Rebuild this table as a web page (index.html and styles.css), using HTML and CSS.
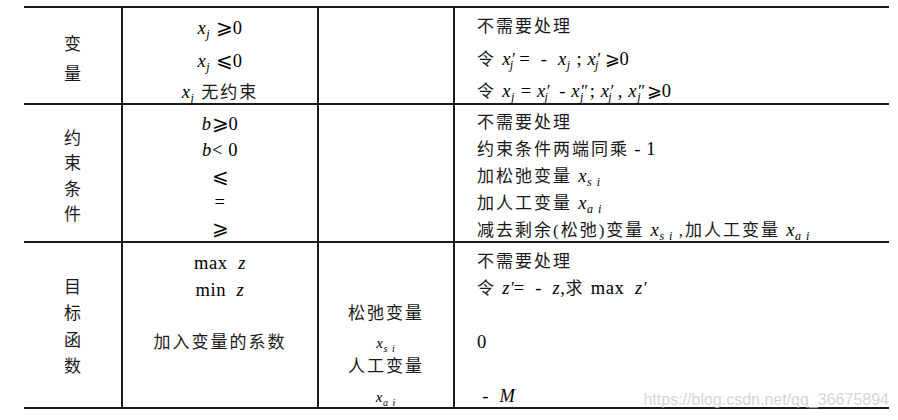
FILE: index.html
```html
<!DOCTYPE html>
<html lang="zh-CN">
<head>
<meta charset="utf-8">
<title>线性规划标准化</title>
<link rel="stylesheet" href="styles.css">
</head>
<body>
<div class="sheet">
  <div class="grid">
    <div class="cell c1 r1a"><div>变</div><div>量</div></div>
    <div class="cell c2 r1b">
      <div><span class="m"><i>x</i><sub>j</sub> <span class="rel">⩾</span>0</span></div>
      <div><span class="m"><i>x</i><sub>j</sub> <span class="rel">⩽</span>0</span></div>
      <div><span class="m"><i>x</i><sub>j</sub></span> 无约束</div>
    </div>
    <div class="cell c3"></div>
    <div class="cell c4 r1d">
      <div>不需要处理</div>
      <div>令 <span class="m"><i>x</i><span class="pr">′</span><sub class="under">j</sub> = &nbsp;- &nbsp;<i>x</i><sub>j</sub> ; <i>x</i><span class="pr">′</span><sub class="under">j</sub> <span class="rel sm">⩾</span>0</span></div>
      <div>令 <span class="m"><i>x</i><sub>j</sub> = <i>x</i><span class="pr">′</span><sub class="under">j</sub> &nbsp;- <i>x</i><span class="pr">″</span><sub class="under2">j</sub> ; <i>x</i><span class="pr">′</span><sub class="under">j</sub> , <i>x</i><span class="pr">″</span><sub class="under2">j</sub> <span class="rel sm">⩾</span>0</span></div>
    </div>

    <div class="cell c1 r2a"><div>约</div><div>束</div><div>条</div><div>件</div></div>
    <div class="cell c2 r2b">
      <div><span class="m"><i>b</i><span class="rel">⩾</span>0</span></div>
      <div><span class="m"><i>b</i>&lt; 0</span></div>
      <div><span class="m"><span class="rel">⩽</span></span></div>
      <div><span class="m">=</span></div>
      <div><span class="m"><span class="rel">⩾</span></span></div>
    </div>
    <div class="cell c3"></div>
    <div class="cell c4 r2d">
      <div>不需要处理</div>
      <div>约束条件两端同乘<span class="m"> - 1</span></div>
      <div>加松弛变量 <span class="m"><i>x</i><sub>s i</sub></span></div>
      <div>加人工变量 <span class="m"><i>x</i><sub>a i</sub></span></div>
      <div>减去剩余(松弛)变量 <span class="m"><i>x</i><sub>s i</sub> </span>,加人工变量 <span class="m"><i>x</i><sub>a i</sub></span></div>
    </div>

    <div class="cell c1 r3a"><div>目</div><div>标</div><div>函</div><div>数</div></div>
    <div class="cell c2 r3b">
      <div><span class="m">max&nbsp; <i>z</i></span></div>
      <div><span class="m">min&nbsp; <i>z</i></span></div>
      <div>&nbsp;</div>
      <div>加入变量的系数</div>
    </div>
    <div class="cell c3 r3c">
      <div>松弛变量</div>
      <div class="small gap5"><span class="m"><i>x</i><sub>s i</sub></span></div>
      <div>人工变量</div>
      <div class="small gap6"><span class="m"><i>x</i><sub>a i</sub></span></div>
    </div>
    <div class="cell c4 r3d">
      <div>不需要处理</div>
      <div>令 <span class="m"><i>z</i><span class="pr">′</span>= &nbsp;- &nbsp;<i>z</i>,</span>求 <span class="m">max&nbsp; <i>z</i><span class="pr">′</span></span></div>
      <div>&nbsp;</div>
      <div><span class="m">0</span></div>
      <div>&nbsp;</div>
      <div><span class="m">&nbsp;- &nbsp;<i>M</i></span></div>
    </div>
  </div>
  <div class="watermark">https://blog.csdn.net/qq_36675894</div>
</div>
</body>
</html>
```

FILE: styles.css
```css
html, body {
  margin: 0;
  padding: 0;
  background: #ffffff;
}

body {
  font-family: "Liberation Serif", "Noto Sans CJK SC", serif;
  font-size: 17px;
  color: #1a1a1a;
  letter-spacing: 2px;
}

.sheet {
  position: relative;
  margin: 6px 0 0 24px;
  width: 865px;
}

.grid {
  display: grid;
  grid-template-columns: 99px 196px 136px 434px;
  grid-template-rows: 97px 138px 166px;
  border-top: 2px solid #1c1c1c;
}

.cell {
  box-sizing: border-box;
  border-bottom: 2px solid #1c1c1c;
  white-space: nowrap;
}

.c1, .c2, .c3 {
  border-right: 2px solid #1c1c1c;
  text-align: center;
}

.c1 {
  padding-left: 2px;
}

.c4 {
  padding-left: 22px;
}

.m {
  font-family: "Liberation Serif", serif;
  font-size: 18.5px;
  letter-spacing: 0.6px;
  color: #000;
}

i {
  font-style: italic;
}

sub {
  font-family: "Liberation Serif", serif;
  font-style: italic;
  font-size: 12px;
  line-height: 0;
  vertical-align: -4px;
  letter-spacing: 1px;
}

.pr {
  font-family: "Liberation Serif", "DejaVu Serif", serif;
  font-style: italic;
  font-size: 17px;
  line-height: 0;
  vertical-align: 1px;
  letter-spacing: 0;
}

sub.under {
  margin-left: -5px;
}

sub.under2 {
  margin-left: -7px;
}

.rel {
  font-family: "DejaVu Sans", sans-serif;
  font-size: 20px;
  font-weight: 200;
  letter-spacing: 0;
}

.rel.sm {
  font-size: 18px;
}

/* row 1 */
.r1a { padding-top: 22px; line-height: 30px; }
.r1b { padding-top: 4px; line-height: 31.5px; }
.r1d { padding-top: 3px; line-height: 31.5px; }

/* row 2 */
.r2a { padding-top: 21px; line-height: 25.3px; }
.r2b { padding-top: 6px; line-height: 25.8px; }
.r2d { padding-top: 5px; line-height: 26px; }

/* row 3 */
.r3a { padding-top: 32px; line-height: 26.3px; }
.r3b { padding-top: 7px; line-height: 26px; }
.r3c { padding-top: 59px; line-height: 24px; }
.r3d { padding-top: 6px; line-height: 26.4px; }

.small .m {
  font-size: 15px;
}

.small sub {
  font-size: 10px;
}

.gap5 { margin-top: 5px; }
.gap6 { margin-top: 6px; }

.watermark {
  position: absolute;
  right: 0;
  top: 384px;
  font-family: "Liberation Sans", sans-serif;
  font-size: 16px;
  letter-spacing: 0;
  color: rgba(200, 200, 200, 0.75);
  line-height: 20px;
}
```
